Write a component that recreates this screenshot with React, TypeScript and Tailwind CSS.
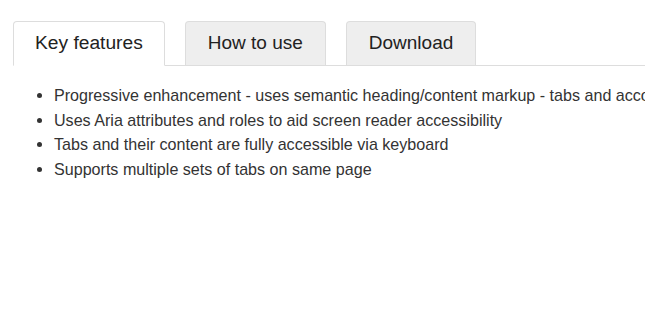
import React from "react";

const tabs = ["Key features", "How to use", "Download"];
const items = [
  "Progressive enhancement - uses semantic heading/content markup - tabs and accordion views are generated with JavaScript",
  "Uses Aria attributes and roles to aid screen reader accessibility",
  "Tabs and their content are fully accessible via keyboard",
  "Supports multiple sets of tabs on same page",
];

export default function App() {
  return (
    <div
      className="w-[660px] h-[330px] bg-white pl-[13px] pt-[21px] overflow-hidden"
      style={{ fontFamily: '"Liberation Sans", Arial, sans-serif' }}
    >
      <div className="w-[632px]">
        <ul className="flex gap-[20px] border-b border-[#dddddd] h-[45px]">
          {tabs.map((t, i) => (
            <li
              key={t}
              className={
                i === 0
                  ? "h-[45px] px-[21px] flex items-center text-[19.2px] text-[#222] bg-white border border-[#dddddd] border-b-white rounded-t-[4px] -mb-px"
                  : "h-[44px] px-[22px] flex items-center text-[19px] text-[#222] bg-[#eeeeee] border border-[#dddddd] border-b-0 rounded-t-[4px]"
              }
            >
              {t}
            </li>
          ))}
        </ul>
        <div className="overflow-hidden pt-[17px]">
          <ul className="list-disc pl-[41px] text-[16.1px] leading-[24.6px] text-[#333] whitespace-nowrap">
            {items.map((it) => (
              <li key={it}>{it}</li>
            ))}
          </ul>
        </div>
      </div>
    </div>
  );
}
